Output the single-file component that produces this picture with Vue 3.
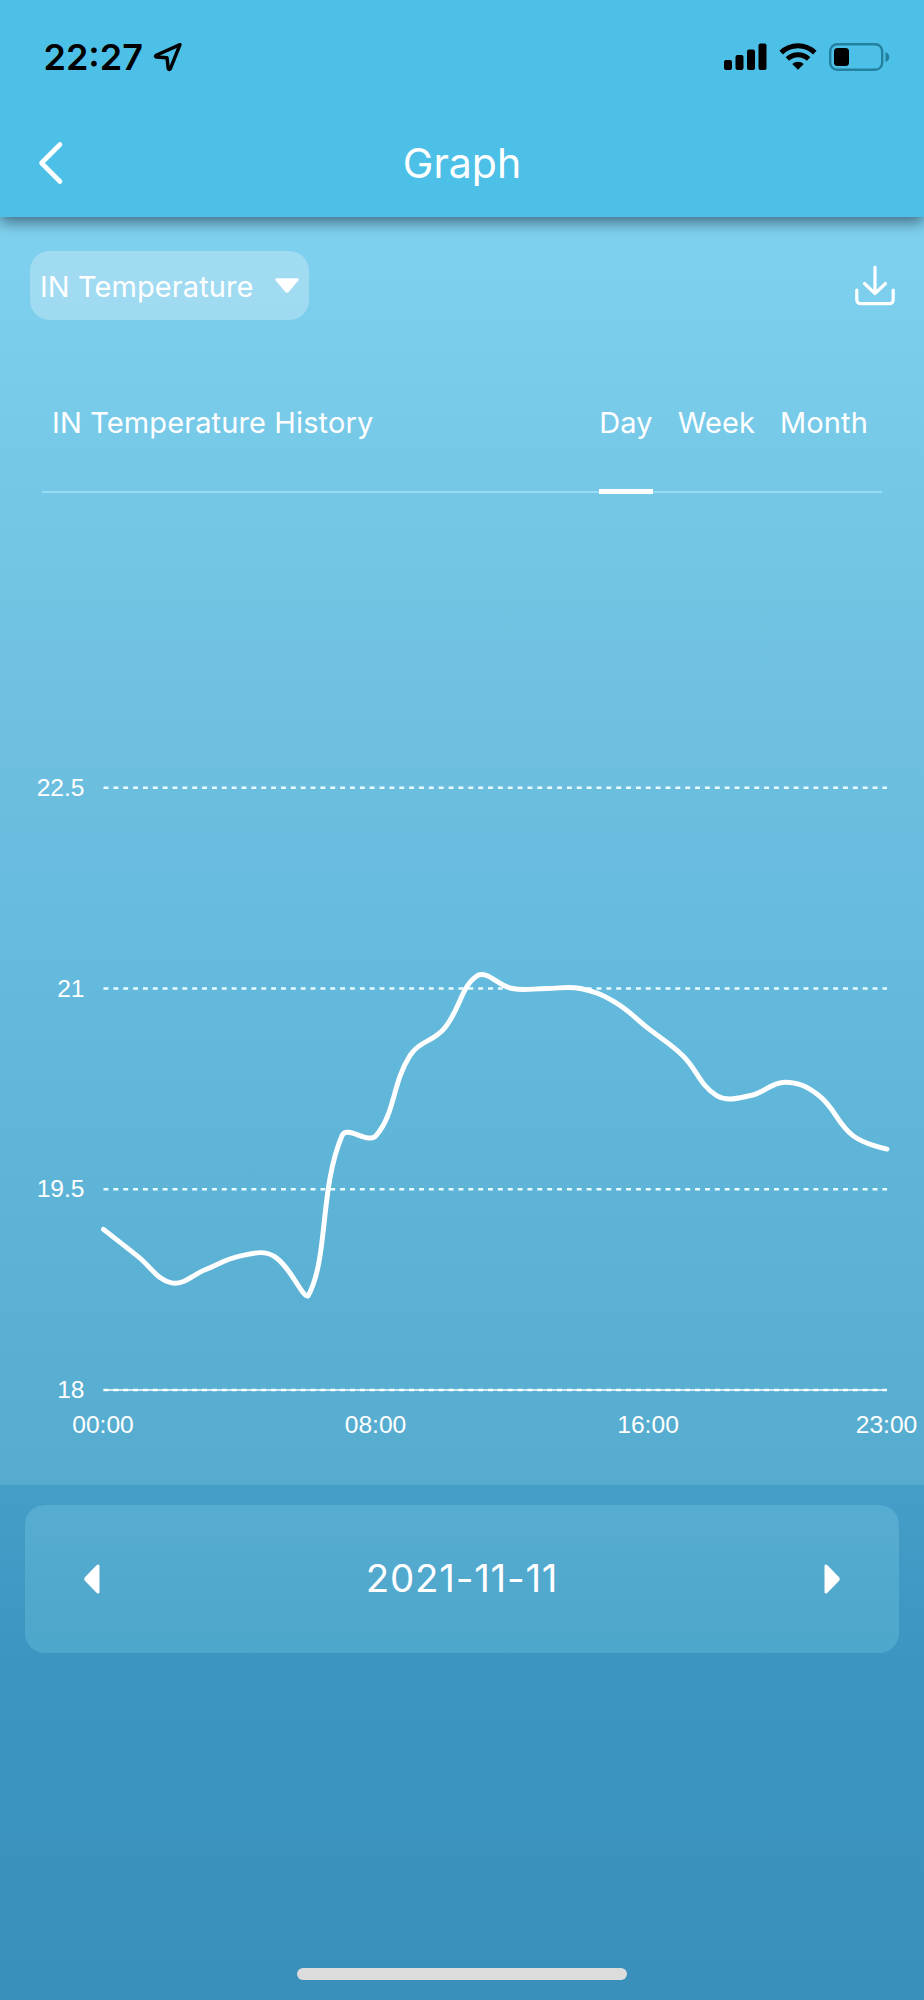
<template>
  <div class="screen">
    <header class="header">
      <div class="status-bar">
        <div class="status-left">
          <span class="time">22:27</span>
          <svg class="location" width="30" height="30" viewBox="0 0 30 30">
            <path
              d="M27 2.6 3.2 13.2Q1.6 14.6 3.4 15L14 15.8 15.2 26.4Q16.2 28.4 17.4 26.6Z"
              fill="none"
              stroke="#000"
              stroke-width="3.4"
              stroke-linejoin="round"
            />
          </svg>
        </div>
        <div class="status-right">
          <svg width="43" height="28" viewBox="0 0 43 28">
            <rect x="0" y="17" width="8" height="10" rx="2" />
            <rect x="11.5" y="12" width="8" height="15" rx="2" />
            <rect x="23" y="6.5" width="8" height="20.5" rx="2" />
            <rect x="34.5" y="0.5" width="8" height="26.5" rx="2" />
          </svg>
          <svg width="38" height="28" viewBox="0 0 38 28">
            <path
              d="M2.2 9.6a24 24 0 0 1 33.6 0M8.4 16a15.2 15.2 0 0 1 21.2 0"
              fill="none"
              stroke="#000"
              stroke-width="5"
            />
            <path d="M19 26.8 13.2 21a8.3 8.3 0 0 1 11.6 0Z" />
          </svg>
          <svg width="61" height="28" viewBox="0 0 61 28">
            <rect
              class="battery-case"
              x="1.2"
              y="1.2"
              width="52"
              height="25.6"
              rx="7"
            />
            <rect x="5" y="5" width="15" height="18" rx="3.5" />
            <path class="battery-tip" d="M56.5 9q3.8 1.5 3.8 5t-3.8 5Z" />
          </svg>
        </div>
      </div>
      <div class="title-bar">
        <svg class="back" width="26" height="44" viewBox="0 0 26 44">
          <path d="M22 3.5 3.5 22 22 40.5" />
        </svg>
        <h1>Graph</h1>
      </div>
    </header>

    <main class="content">
      <div class="toolbar">
        <button class="select">
          <span>IN Temperature</span>
          <svg width="26" height="17" viewBox="0 0 26 17">
            <path
              d="M2.5 2.5h21L14 14q-1 .8-2 0Z"
              stroke="#fff"
              stroke-width="2.4"
              stroke-linejoin="round"
            />
          </svg>
        </button>
        <svg class="download" width="40" height="41" viewBox="0 0 40 41">
          <path
            d="M20 2v26.5M9.5 18.5 20 28.5l10.5-10M1.8 25v9.5q0 4.2 4.2 4.2h28q4.2 0 4.2-4.2V25"
          />
        </svg>
      </div>

      <div class="history">
        <h2>IN Temperature History</h2>
        <nav class="tabs">
          <a
            v-for="tab in tabs"
            :key="tab"
            class="tab"
            :class="{ active: tab === period }"
            @click="period = tab"
            >{{ tab }}</a
          >
        </nav>
      </div>

      <svg class="chart" width="924" height="991" viewBox="0 0 924 991">
        <g v-for="tick in yTicks" :key="tick">
          <text class="label" x="84.5" :y="toY(tick) + 8" text-anchor="end">
            {{ tick }}
          </text>
          <line class="grid" :x1="left" :x2="right" :y1="toY(tick)" :y2="toY(tick)" />
        </g>
        <line class="axis" :x1="left" :x2="right" :y1="toY(18)" :y2="toY(18)" />
        <text
          v-for="hour in xTicks"
          :key="hour"
          class="label"
          :x="toX(hour) - 0.5"
          y="939"
          text-anchor="middle"
        >
          {{ String(hour).padStart(2, "0") }}:00
        </text>
        <path class="series" :d="linePath" />
      </svg>
    </main>

    <footer class="footer">
      <div class="date-picker">
        <svg width="18" height="32" viewBox="0 0 18 32">
          <path d="M15.5 3v26q0 1-1 .2L2.6 17q-.9-1 0-2L14.5 2.8q1-.8 1 .2Z" />
        </svg>
        <span class="date">2021-11-11</span>
        <svg width="18" height="32" viewBox="0 0 18 32">
          <path d="M2.5 3v26q0 1 1 .2L15.4 17q.9-1 0-2L3.5 2.8q-1-.8-1 .2Z" />
        </svg>
      </div>
      <div class="home-indicator"></div>
    </footer>
  </div>
</template>

<script setup>
import { computed, ref } from "vue";

const tabs = ["Day", "Week", "Month"];
const period = ref("Day");

const yTicks = [22.5, 21, 19.5, 18];
const xTicks = [0, 8, 16, 23];

// One reading per hour
const temps = [
  19.2, 19, 18.8, 18.9, 19, 19, 18.7, 19.9, 19.9, 20.5, 20.7, 21.1, 21, 21, 21,
  20.9, 20.7, 20.5, 20.2, 20.2, 20.3, 20.2, 19.9, 19.8,
];

const left = 103.5;
const right = 887;

const toX = (hour) => left + (hour * (right - left)) / 23;
const toY = (temp) => 895.9 - (temp - 18) * 133.8;

// Smooth curve, control points stay close to the data range
const linePath = computed(() => {
  const points = temps.map((t, i) => [toX(i), toY(t)]);
  const top = toY(Math.max(...temps)) - 4;
  const bottom = toY(Math.min(...temps));
  const clamp = (y) => Math.min(bottom, Math.max(top, y));
  const last = points.length - 1;

  let d = `M${points[0]}`;
  let cp0 = points[0];
  for (let i = 1; i <= last; i++) {
    const [x, y] = points[i];
    let cp1 = points[i];
    let nextCp0 = points[i];
    if (i < last) {
      const [px, py] = points[i - 1];
      const [nx, ny] = points[i + 1];
      const prevLen = Math.hypot(x - px, y - py);
      const nextLen = Math.hypot(nx - x, ny - y);
      const ratio = nextLen / (nextLen + prevLen);
      const vx = (nx - px) * 0.4;
      const vy = (ny - py) * 0.4;
      cp1 = [x - vx * (1 - ratio), clamp(y - vy * (1 - ratio))];
      nextCp0 = [x + vx * ratio, clamp(y + vy * ratio)];
    }
    d += `C${cp0} ${cp1} ${x},${y}`;
    cp0 = nextCp0;
  }
  return d;
});
</script>

<style>
body {
  margin: 0;
}
</style>

<style scoped>
.screen {
  display: flex;
  flex-direction: column;
  width: 924px;
  height: 2000px;
  overflow: hidden;
  color: #fff;
  font-family: Inter, "Liberation Sans", sans-serif;
}

.header {
  position: relative;
  z-index: 1;
  box-sizing: border-box;
  height: 217px;
  background: #4dc0e7;
  box-shadow: 0 5px 14px rgba(40, 60, 80, 0.7);
}

.status-bar {
  display: flex;
  justify-content: space-between;
  align-items: center;
  height: 114px;
  padding: 0 34px 0 43.5px;
  color: #000;
}

.status-left,
.status-right {
  display: flex;
  align-items: center;
}

.status-left {
  gap: 9.5px;
}

.status-right {
  gap: 12px;
}

.time {
  font-size: 36px;
  font-weight: 600;
}

.battery-case {
  fill: none;
  stroke: #23809f;
  stroke-width: 2.4;
}

.battery-tip {
  fill: #23809f;
}

.title-bar {
  display: grid;
  grid-template-columns: 58px 1fr 58px;
  align-items: center;
  height: 97px;
  padding: 0 38px;
}

.back path {
  fill: none;
  stroke: #fff;
  stroke-width: 4.6;
  stroke-linecap: round;
  stroke-linejoin: round;
}

h1 {
  margin: 0;
  text-align: center;
  font-size: 41px;
  font-weight: 400;
}

.content {
  display: flex;
  flex-direction: column;
  height: 1268px;
  background: linear-gradient(#7fd2ef, #77c9e8 18%, #6ebfdf 42%, #64badd 60%, #55accf);
}

.toolbar {
  display: flex;
  justify-content: space-between;
  align-items: center;
  padding: 34px 29.5px 0 30px;
}

.select {
  display: flex;
  justify-content: space-between;
  align-items: center;
  width: 279px;
  height: 69px;
  padding: 0 9px 0 10px;
  border: none;
  border-radius: 20px;
  background: rgba(185, 226, 245, 0.6);
  color: #fff;
  font-family: inherit;
  font-size: 29px;
  letter-spacing: 0.08px;
}

.select span {
  margin-top: 1px;
}

.select svg {
  fill: #fff;
}

.download path {
  fill: none;
  stroke: #fff;
  stroke-width: 3.2;
  stroke-linecap: round;
  stroke-linejoin: round;
}

.history {
  display: flex;
  justify-content: space-between;
  align-items: stretch;
  height: 139px;
  margin: 32px 42px 0;
  padding: 0 14px 0 10px;
  border-bottom: 2.5px solid #98dcf7;
}

h2,
.tab {
  margin: 0;
  font-size: 29px;
  font-weight: 400;
  line-height: 142px;
  letter-spacing: 0.12px;
}

.tabs {
  display: flex;
  gap: 25px;
}

.tab {
  height: 137px;
}

.tab.active {
  border-bottom: 5px solid #fff;
}

.chart {
  display: block;
  margin-top: 0.5px;
}

.label {
  fill: #fff;
  font-family: "Liberation Sans", Arial, sans-serif;
  font-size: 24.6px;
}

.grid {
  stroke: #e8fbff;
  stroke-width: 2.46;
  stroke-dasharray: 4.93;
}

.axis {
  stroke: #fff;
  stroke-width: 2;
  opacity: 0.75;
}

.series {
  fill: none;
  stroke: #fff;
  stroke-width: 4.93;
  stroke-linecap: round;
  stroke-linejoin: bevel;
}

.footer {
  display: flex;
  flex: 1;
  flex-direction: column;
  justify-content: space-between;
  align-items: center;
  padding: 20px 25px;
  background: linear-gradient(#459ec8, #3b95c0 35%, #3990bb);
}

.date-picker {
  display: flex;
  justify-content: space-between;
  align-items: center;
  box-sizing: border-box;
  width: 874px;
  height: 148px;
  padding: 0 58px;
  border-radius: 20px;
  background: linear-gradient(#57acd1, #4da6cb);
}

.date-picker svg {
  fill: #fff;
  stroke: #fff;
  stroke-width: 2;
}

.date {
  margin-bottom: 2px;
  font-size: 38.5px;
  letter-spacing: 0.75px;
}

.home-indicator {
  width: 330px;
  height: 12px;
  border-radius: 6px;
  background: #dcdcdc;
}
</style>
